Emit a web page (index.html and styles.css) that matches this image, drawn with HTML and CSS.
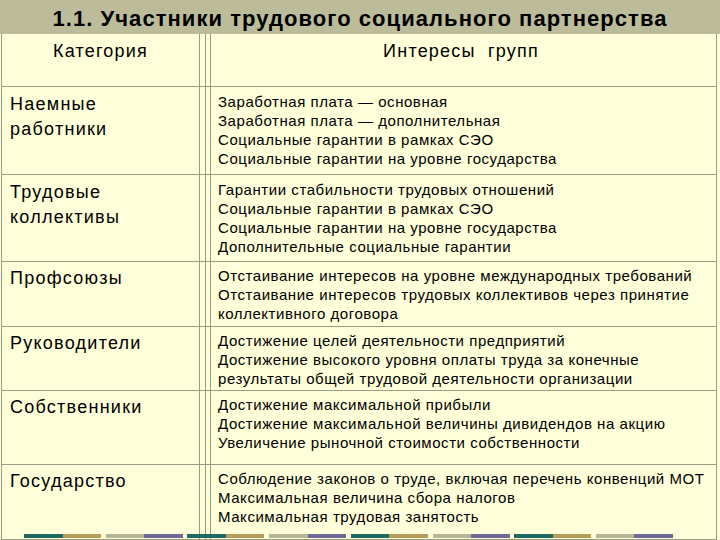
FILE: index.html
```html
<!DOCTYPE html>
<html lang="ru">
<head>
<meta charset="utf-8">
<title>Участники трудового социального партнерства</title>
<link rel="stylesheet" href="styles.css">
</head>
<body>
<div class="slide">
  <h1 class="title">1.1. Участники трудового социального партнерства</h1>
  <div class="table">
    <div class="row head">
      <div class="cat">Категория</div>
      <div class="int">Интересы&nbsp;&nbsp;групп</div>
    </div>
    <div class="row r1">
      <div class="cat">Наемные<br>работники</div>
      <div class="int">Заработная плата — основная<br>Заработная плата — дополнительная<br>Социальные гарантии в рамках СЭО<br>Социальные гарантии на уровне государства</div>
    </div>
    <div class="row r2">
      <div class="cat">Трудовые<br>коллективы</div>
      <div class="int">Гарантии стабильности трудовых отношений<br>Социальные гарантии в рамках СЭО<br>Социальные гарантии на уровне государства<br>Дополнительные социальные гарантии</div>
    </div>
    <div class="row r3 tight">
      <div class="cat">Профсоюзы</div>
      <div class="int">Отстаивание интересов на уровне международных требований<br>Отстаивание интересов трудовых коллективов через принятие<br>коллективного договора</div>
    </div>
    <div class="row r4 tight">
      <div class="cat">Руководители</div>
      <div class="int">Достижение целей деятельности предприятий<br>Достижение высокого уровня оплаты труда за конечные<br>результаты общей трудовой деятельности организации</div>
    </div>
    <div class="row r5 tight">
      <div class="cat">Собственники</div>
      <div class="int">Достижение максимальной прибыли<br>Достижение максимальной величины дивидендов на акцию<br>Увеличение рыночной стоимости собственности</div>
    </div>
    <div class="row r6 tight">
      <div class="cat">Государство</div>
      <div class="int">Соблюдение законов о труде, включая перечень конвенций МОТ<br>Максимальная величина сбора налогов<br>Максимальная трудовая занятость</div>
    </div>
  </div>
  <div class="strip">
    <span class="pair"><i class="teal"></i><i class="gold"></i></span>
    <span class="pair"><i class="sage"></i><i class="violet"></i></span>
    <span class="pair"><i class="teal"></i><i class="gold"></i></span>
    <span class="pair"><i class="sage"></i><i class="violet"></i></span>
    <span class="pair"><i class="teal"></i><i class="gold"></i></span>
    <span class="pair"><i class="sage"></i><i class="violet"></i></span>
    <span class="pair"><i class="teal"></i><i class="gold"></i></span>
    <span class="pair"><i class="sage"></i><i class="violet"></i></span>
  </div>
</div>
</body>
</html>
```

FILE: styles.css
```css
html, body {
  margin: 0;
  padding: 0;
  background: #ffffd9;
}
body {
  width: 720px;
  height: 540px;
  overflow: hidden;
  font-family: "Liberation Sans", Arial, sans-serif;
  color: #000;
}
.slide {
  position: relative;
  width: 720px;
  height: 540px;
  display: flex;
  flex-direction: column;
}
.title {
  margin: 0;
  height: 34px;
  background: #bcbc9b;
  font-size: 22px;
  font-weight: bold;
  letter-spacing: 1.05px;
  line-height: 37px;
  text-align: center;
  flex: none;
}
.table {
  margin-left: 1px;
  width: 714px;
  border-left: 1px solid #9c9c84;
  border-right: 1px solid #9c9c84;
  flex: 1;
  display: flex;
  flex-direction: column;
}
.row {
  display: grid;
  grid-template-columns: 198px 1fr;
  border-bottom: 1px solid #9c9c84;
  flex: none;
}
.row .cat {
  border-right: 1px solid #9c9c84;
  padding: 5px 0 0 8px;
  font-size: 18px;
  letter-spacing: 1.25px;
  line-height: 25px;
}
.row .int {
  margin-left: 5px;
  border-left: 1px solid #9c9c84;
  box-shadow: inset 4px 0 0 #ffffd9, inset 5px 0 0 #9c9c84;
  padding: 5px 0 0 12px;
  font-size: 15px;
  letter-spacing: 0.55px;
  line-height: 19px;
}
.row.tight .cat { padding-top: 4px; }
.row.tight .int { padding-top: 4px; }
.head .cat, .head .int {
  text-align: center;
  font-size: 18px;
  letter-spacing: 1.2px;
  line-height: 22px;
  padding: 6px 0 0;
}
.head { height: 52px; }
.r1 { height: 87px; }
.r2 { height: 86px; }
.r3 { height: 64px; }
.r4 { height: 63px; }
.r5 { height: 73px; }
.r6 { flex: 1; }
.strip {
  position: absolute;
  left: 24px;
  top: 534px;
  width: 649px;
  height: 4px;
  display: flex;
  justify-content: space-between;
}
.pair {
  display: flex;
  width: 77px;
}
.pair i {
  flex: 1;
  display: block;
}
.teal { background: #1c6a60; }
.gold { background: #b89c5a; }
.sage { background: #b7b796; }
.violet { background: #6e6a98; }
```
